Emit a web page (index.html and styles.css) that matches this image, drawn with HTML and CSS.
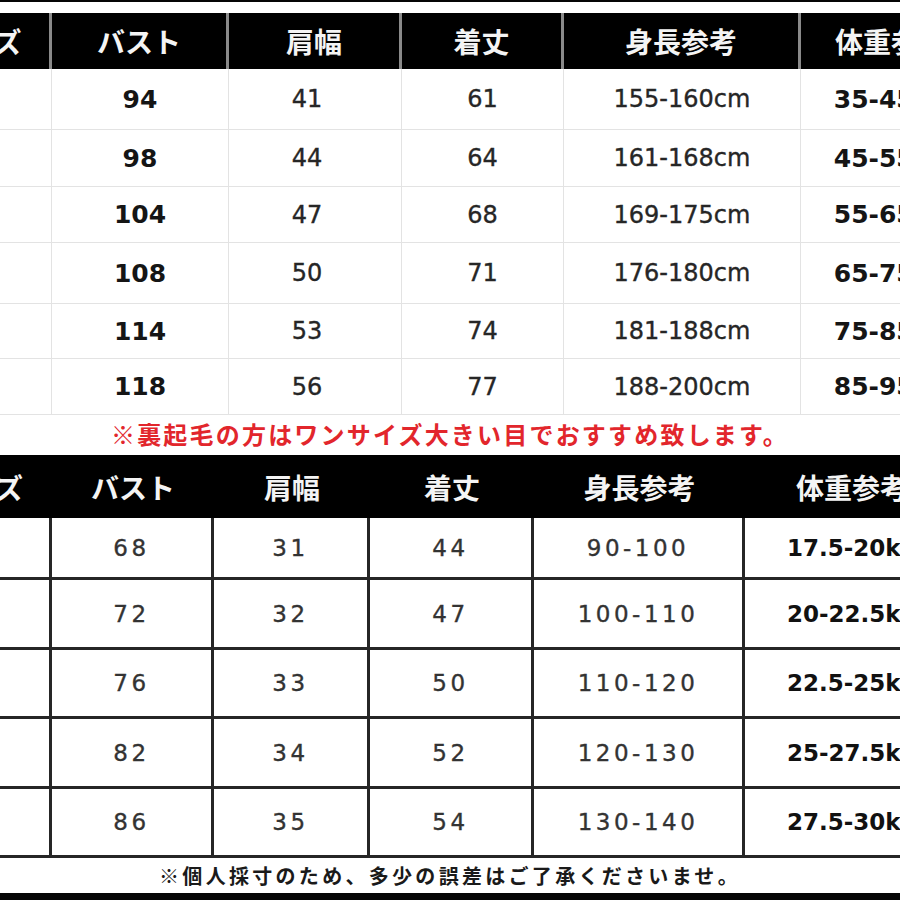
FILE: index.html
```html
<!DOCTYPE html>
<html lang="ja">
<head>
<meta charset="utf-8">
<title>サイズ表</title>
<link rel="stylesheet" href="styles.css">
</head>
<body>
<div class="page">
  <div class="bar bar-top"></div>

  <table class="chart chart-adult">
    <colgroup>
      <col class="c1"><col class="c2"><col class="c3"><col class="c4"><col class="c5"><col class="c6">
    </colgroup>
    <thead>
      <tr><th>サイズ</th><th>バスト</th><th>肩幅</th><th>着丈</th><th>身長参考</th><th>体重参考</th></tr>
    </thead>
    <tbody>
      <tr><td class="size">S</td><td class="strong">94</td><td class="shift">41</td><td>61</td><td>155-160cm</td><td class="strong">35-45kg</td></tr>
      <tr><td class="size">M</td><td class="strong">98</td><td class="shift">44</td><td>64</td><td>161-168cm</td><td class="strong">45-55kg</td></tr>
      <tr><td class="size">L</td><td class="strong">104</td><td class="shift">47</td><td>68</td><td>169-175cm</td><td class="strong">55-65kg</td></tr>
      <tr><td class="size">XL</td><td class="strong">108</td><td class="shift">50</td><td>71</td><td>176-180cm</td><td class="strong">65-75kg</td></tr>
      <tr><td class="size">2XL</td><td class="strong">114</td><td class="shift">53</td><td>74</td><td>181-188cm</td><td class="strong">75-85kg</td></tr>
      <tr><td class="size">3XL</td><td class="strong">118</td><td class="shift">56</td><td>77</td><td>188-200cm</td><td class="strong">85-95kg</td></tr>
    </tbody>
  </table>

  <p class="note-red">※裏起毛の方はワンサイズ大きい目でおすすめ致します。</p>

  <table class="chart chart-kids">
    <colgroup>
      <col class="k1"><col class="k2"><col class="k3"><col class="k4"><col class="k5"><col class="k6">
    </colgroup>
    <thead>
      <tr><th>サイズ</th><th>バスト</th><th>肩幅</th><th>着丈</th><th>身長参考</th><th>体重参考</th></tr>
    </thead>
    <tbody>
      <tr><td class="size">100</td><td>68</td><td>31</td><td>44</td><td>90-100</td><td class="strong">17.5-20kg</td></tr>
      <tr><td class="size">110</td><td>72</td><td>32</td><td>47</td><td>100-110</td><td class="strong">20-22.5kg</td></tr>
      <tr><td class="size">120</td><td>76</td><td>33</td><td>50</td><td>110-120</td><td class="strong">22.5-25kg</td></tr>
      <tr><td class="size">130</td><td>82</td><td>34</td><td>52</td><td>120-130</td><td class="strong">25-27.5kg</td></tr>
      <tr><td class="size">140</td><td>86</td><td>35</td><td>54</td><td>130-140</td><td class="strong">27.5-30kg</td></tr>
    </tbody>
  </table>

  <p class="note">※個人採寸のため、多少の誤差はご了承くださいませ。</p>
  <div class="bar bar-bottom"></div>
</div>
</body>
</html>
```

FILE: styles.css
```css
html, body {
  margin: 0;
  padding: 0;
  background: #ffffff;
}

.page {
  width: 900px;
  height: 900px;
  overflow: hidden;
  display: flex;
  flex-direction: column;
  background: #ffffff;
  font-family: "DejaVu Sans", "Noto Sans CJK JP", sans-serif;
}

.bar {
  background: #050505;
  flex: none;
}

.bar-top {
  height: 2px;
  margin-bottom: 11px;
}

.bar-bottom {
  height: 7px;
}

.chart {
  flex: none;
  margin-left: -89px;
  table-layout: fixed;
  border-collapse: separate;
  border-spacing: 0;
}

.chart th {
  background: #000000;
  color: #f4f4f4;
  font-family: "Noto Sans CJK JP", sans-serif;
  font-weight: 700;
  font-size: 28px;
  padding: 0;
  text-align: center;
  vertical-align: middle;
}

.chart td {
  padding: 0;
  text-align: center;
  vertical-align: middle;
  color: #262626;
  font-size: 24px;
  -webkit-text-stroke: 0.35px #262626;
}

.chart td.strong {
  font-weight: 700;
  color: #151515;
  font-size: 25px;
  -webkit-text-stroke: 0;
}

.chart td.size {
  padding-right: 40px;
}

.chart td.shift {
  padding-right: 16px;
}

/* ---- adult chart ---- */
.chart-adult {
  width: 1070px;
}
.chart-adult .c1 { width: 141px; }
.chart-adult .c2 { width: 177px; }
.chart-adult .c3 { width: 173px; }
.chart-adult .c4 { width: 162px; }
.chart-adult .c5 { width: 237px; }
.chart-adult .c6 { width: 180px; }

.chart-adult thead tr {
  height: 56px;
}
.chart-adult th {
  border-right: 3px solid #8a8a8a;
}
.chart-adult th:last-child {
  border-right: none;
}
.chart-adult td {
  border-right: 1px solid #e3e3e3;
  border-bottom: 1px solid #e3e3e3;
}
.chart-adult td:last-child {
  border-right: none;
}
.chart-adult tbody tr:nth-child(1) { height: 61px; }
.chart-adult tbody tr:nth-child(2) { height: 57px; }
.chart-adult tbody tr:nth-child(3) { height: 56px; }
.chart-adult tbody tr:nth-child(4) { height: 61px; }
.chart-adult tbody tr:nth-child(5) { height: 55px; }
.chart-adult tbody tr:nth-child(6) { height: 56px; }

.note-red {
  flex: none;
  margin: 0;
  height: 40px;
  padding-bottom: 4px;
  box-sizing: border-box;
  display: flex;
  align-items: center;
  justify-content: center;
  color: #e2262c;
  font-family: "Noto Sans CJK JP", sans-serif;
  font-weight: 700;
  font-size: 24px;
  letter-spacing: 2.2px;
}

/* ---- kids chart ---- */
.chart-kids {
  width: 1048px;
}
.chart-kids .k1 { width: 141px; }
.chart-kids .k2 { width: 162px; }
.chart-kids .k3 { width: 156px; }
.chart-kids .k4 { width: 164px; }
.chart-kids .k5 { width: 211px; }
.chart-kids .k6 { width: 214px; }

.chart-kids thead tr {
  height: 63px;
}
.chart-kids td {
  border-right: 3px solid #262626;
  border-bottom: 3px solid #262626;
  color: #333333;
  font-size: 23px;
  letter-spacing: 3.5px;
  -webkit-text-stroke: 0.35px #333333;
}
.chart-kids td:last-child {
  border-right: none;
}
.chart-kids td.strong {
  letter-spacing: 0;
  font-size: 23px;
  color: #111111;
  -webkit-text-stroke: 0;
}
.chart-kids tbody tr:nth-child(1) { height: 62px; }
.chart-kids tbody tr:nth-child(2) { height: 70px; }
.chart-kids tbody tr:nth-child(3) { height: 69px; }
.chart-kids tbody tr:nth-child(4) { height: 70px; }
.chart-kids tbody tr:nth-child(5) { height: 69px; }

.note {
  flex: 1;
  margin: 0;
  display: flex;
  align-items: center;
  justify-content: center;
  color: #1a1a1a;
  font-family: "Noto Sans CJK JP", sans-serif;
  font-weight: 700;
  font-size: 20px;
  letter-spacing: 3.3px;
}
```
